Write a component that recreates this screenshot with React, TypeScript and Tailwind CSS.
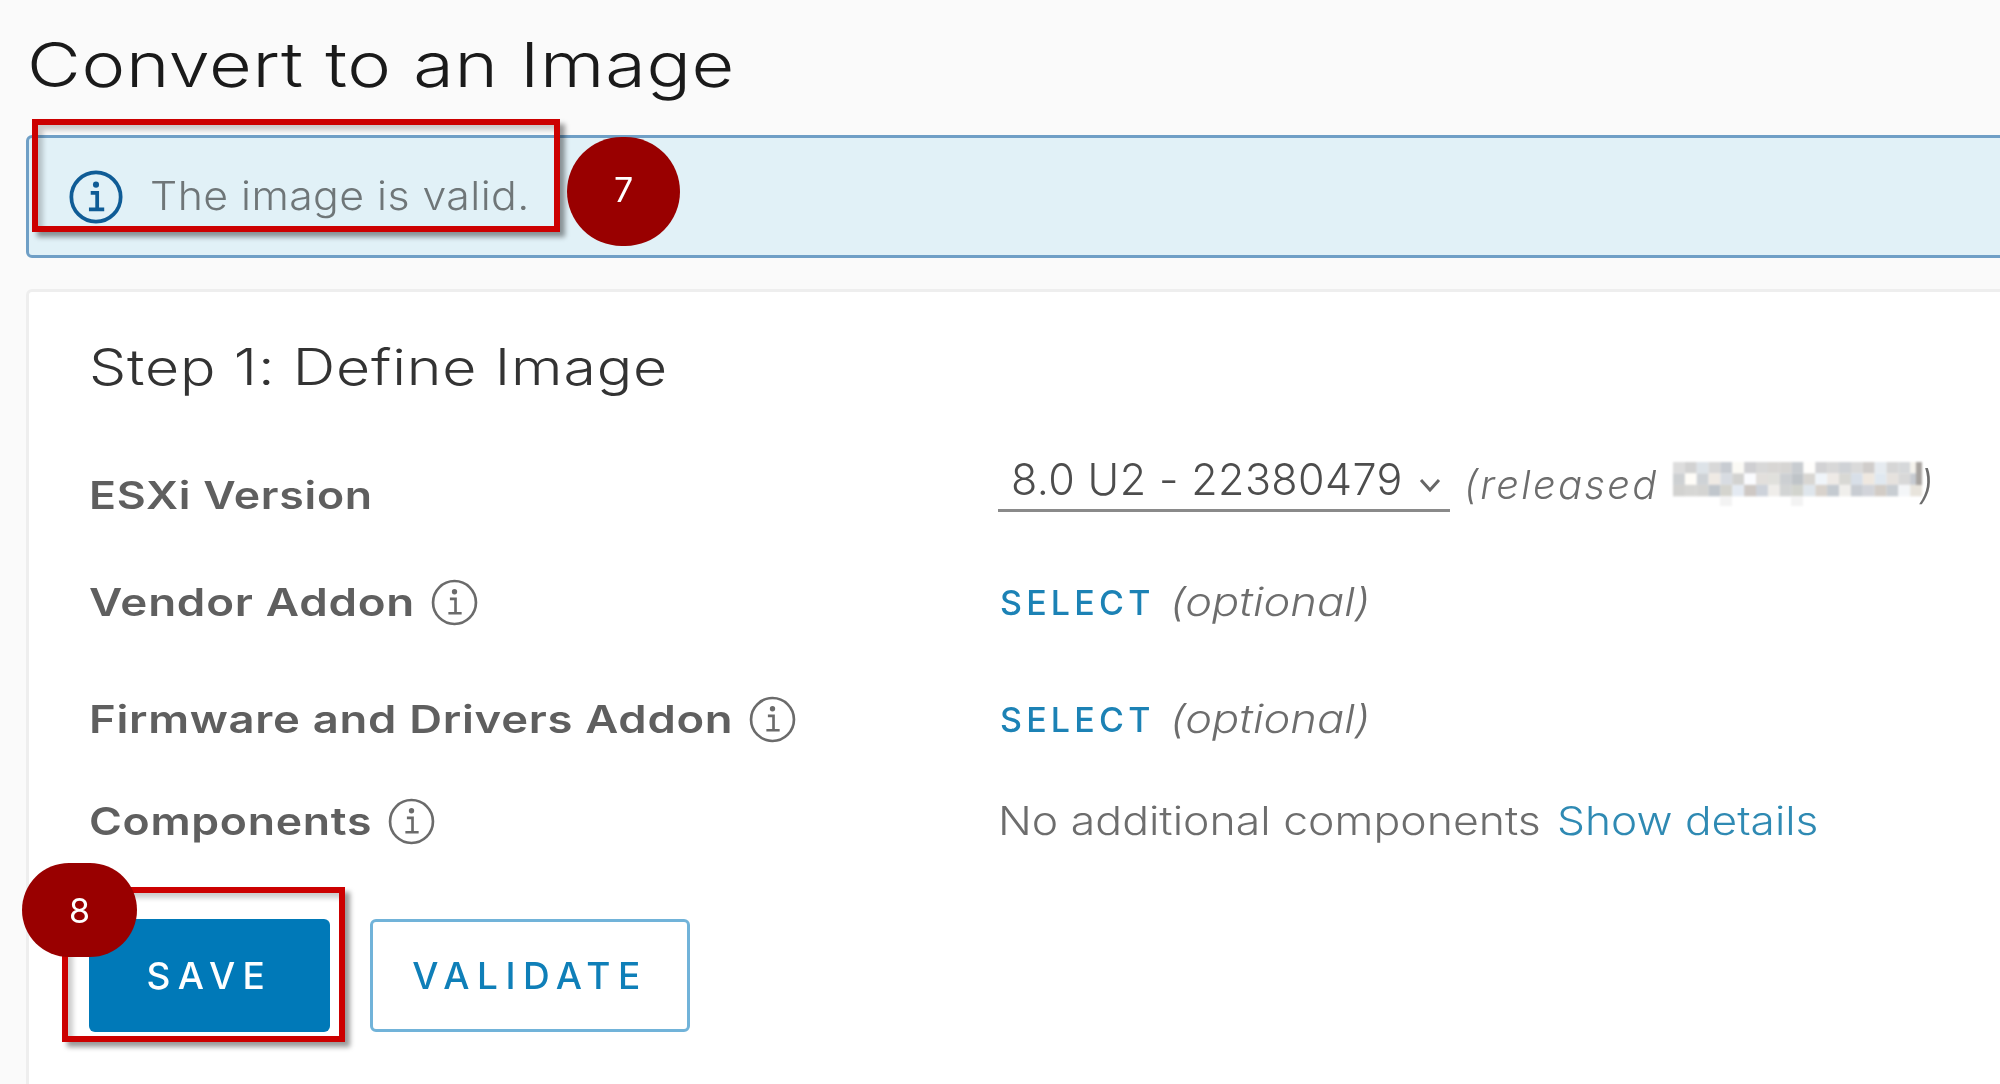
import React from "react";

const font = { fontFamily: '"Inter", "Liberation Sans", sans-serif' };

function Info({ color = "#6b6b6b", size = 47, sw = 2.6 }: { color?: string; size?: number; sw?: number }) {
  return (
    <svg width={size} height={size} viewBox="0 0 46 46" fill="none" className="shrink-0">
      <circle cx="23" cy="23" r="21" stroke={color} strokeWidth={sw} />
      <circle cx="23" cy="12.5" r="2.6" fill={color} />
      <path d="M18.5 19.5H24V33M17 33.5H30" stroke={color} strokeWidth={sw} />
    </svg>
  );
}

/* The original UI face is wider than any installed one: text is widened inside a box of its real width. */
function Wide({ w, s, children }: { w: string; s: string; children: React.ReactNode }) {
  return (
    <span className={`inline-block shrink-0 ${w}`}>
      <span className={`inline-block origin-left whitespace-nowrap ${s}`}>{children}</span>
    </span>
  );
}

const blurRows = [
  "ddd d2d2d2 dde3e8 d8d8d8 c8ccd2 fbfaf5 cfcfd2 d8d8d8 d8d6d4 d6d5d3 c8ccd0 fffefc d2d2d4 d8d8d8 cfd2d6 dadada d0cdcb e6ebf0 d6d6d6 d6d8da f4f2ec",
  "cdd0d2 fffdf8 ced2d6 efeae4 d8dce2 d2d2d0 fbfcff e2dfdc e0e0dc cccfd2 bfc4c8 d8d6d2 f0f5fa eeeae6 d8d8d4 d8dfe8 efe8e0 e0e8f0 e6e2de d8d8d8 c6cad0",
  "d2d2d0 d6d6d4 d4d4d2 c0c6cc d4d4ce e4eaf2 cec8c4 cdd2da efedea d2d4d4 d2d4ce dfe6ec d8d2cc c4cad0 f0efec c8ccd2 d2d4da d2ccc6 c8cdd2 f4f6f8 e8e4dc",
];

function BlurredDate() {
  return (
    <svg width="249" height="46" viewBox="0 0 249 46" className="shrink-0 blur-[0.8px]">
      {blurRows.map((row, y) =>
        row.split(" ").map((c, x) => (
          <rect key={`${x}-${y}`} x={x * 11.86} y={y * 11.4} width="11.96" height="11.5" fill={`#${c}`} />
        )),
      )}
      <rect x="47" y="34" width="12" height="10" fill="#f3f3f3" />
      <rect x="118" y="34" width="12" height="10" fill="#f3f3f3" />
      <rect x="243" y="0" width="6" height="23" fill="#a8a4a0" />
    </svg>
  );
}

function Row({ h, label, w, s, info, children }: { h: string; label: string; w: string; s: string; info?: boolean; children: React.ReactNode }) {
  return (
    <div className={`flex items-center ${h}`}>
      <div className="flex w-[909px] shrink-0 items-center gap-[18px] text-[38px] font-semibold tracking-[0.6px] text-[#5f5f5f]">
        <Wide w={w} s={s}>{label}</Wide>
        {info && <Info />}
      </div>
      {children}
    </div>
  );
}

function Select() {
  return (
    <div className="flex items-center gap-[15px]">
      <span className="ml-[2px] text-[34px] font-medium tracking-[4.2px] text-[#1c82b5]">SELECT</span>
      <span className="text-[39px] font-light italic text-[#6d6d6d]">
        <Wide w="w-[197px]" s="scale-x-[1.16]">(optional)</Wide>
      </span>
    </div>
  );
}

export default function App() {
  return (
    <div style={font} className="relative h-[1084px] w-[2000px] overflow-hidden bg-[#fafafa] blur-[0.4px]">
      <div className="pl-[26px] pt-[26px]">
        <h1 className="ml-[1px] h-[109px] pt-[1px] text-[62px] font-light leading-[76px] tracking-[0.6px] text-[#1a1a1a]">
          <Wide w="w-[708px]" s="scale-x-[1.19]">Convert to an Image</Wide>
        </h1>
        <div className="mr-[-20px] flex h-[123px] items-center gap-[27px] rounded-[6px] border-[3px] border-[#6f9fc6] bg-[#e1f1f7] pl-[40px]">
          <Info color="#0f5c96" size={54} sw={3.2} />
          <span className="mb-[2px] text-[40px] font-light tracking-[0.4px] text-[#6f7678]">
            <Wide w="w-[378px]" s="scale-x-[1.07]">The image is valid.</Wide>
          </span>
        </div>
        <div className="mr-[-20px] mt-[31px] h-[900px] rounded-[6px] border-[3px] border-[#eeeeee] bg-white pl-[60px] pt-[40px]">
          <h2 className="h-[110px] text-[50px] font-light leading-[70px] tracking-[0.7px] text-[#333333]">
            <Wide w="w-[576px]" s="scale-x-[1.18]">Step 1: Define Image</Wide>
          </h2>
          <Row h="h-[107px]" label="ESXi Version" w="w-[282px]" s="scale-x-[1.175]">
            <div className="mb-[29px] flex items-center">
              <div className="flex h-[61px] w-[452px] items-center gap-[14px] border-b-[3px] border-[#8a8a8a] pl-[13px] text-[43px] font-light text-[#4d4d4d]">
                <span className="tracking-[0.4px]">8.0 U2 - 22380479</span>
                <svg width="26" height="16" viewBox="0 0 26 16" fill="none" className="mt-[10px]">
                  <path d="M4 3l9 10 9-10" stroke="#666666" strokeWidth="3" />
                </svg>
              </div>
              <div className="ml-[14px] mt-[8px] flex items-center gap-[14px] text-[40px] font-light italic tracking-[2.3px] text-[#6d6d6d]">
                <span>(released</span>
                <span className="flex items-center">
                  <BlurredDate />
                  <span className="ml-[-2px]">)</span>
                </span>
              </div>
            </div>
          </Row>
          <Row h="h-[107px]" label="Vendor Addon" w="w-[324px]" s="scale-x-[1.204]" info>
            <Select />
          </Row>
          <Row h="h-[127px]" label="Firmware and Drivers Addon" w="w-[642px]" s="scale-x-[1.195]" info>
            <Select />
          </Row>
          <Row h="h-[77px]" label="Components" w="w-[281px]" s="scale-x-[1.174]" info>
            <div className="flex items-center gap-[18px] text-[39px] font-light">
              <span className="text-[#6d6d6d]">
                <Wide w="w-[541px]" s="scale-x-[1.143]">No additional components</Wide>
              </span>
              <span className="text-[#2f8ab3]">
                <Wide w="w-[259px]" s="scale-x-[1.134]">Show details</Wide>
              </span>
            </div>
          </Row>
          <div className="mt-[59px] flex gap-[40px]">
            <button className="h-[113px] w-[241px] rounded-[6px] bg-[#0079b8] text-[37px] font-medium tracking-[7.5px] text-white">SAVE</button>
            <button className="h-[113px] w-[320px] rounded-[6px] border-[3px] border-[#71b3d9] bg-white text-[37px] font-medium tracking-[7.5px] text-[#0f7fb8]">VALIDATE</button>
          </div>
        </div>
      </div>

      <div className="absolute left-[32px] top-[119px] h-[113px] w-[528px] border-[6px] border-[#cc0000] shadow-[5px_5px_5px_rgba(0,0,0,0.4),inset_5px_5px_5px_rgba(0,0,0,0.2)]" />
      <div className="absolute left-[62px] top-[887px] h-[155px] w-[283px] border-[6px] border-[#cc0000] shadow-[5px_5px_5px_rgba(0,0,0,0.4),inset_5px_5px_5px_rgba(0,0,0,0.2)]" />
      <div className="absolute left-[567px] top-[137px] flex h-[109px] w-[113px] items-center justify-center rounded-full bg-[#990000] pb-[4px] text-[34px] text-white">7</div>
      <div className="absolute left-[22px] top-[863px] flex h-[94px] w-[115px] items-center justify-center rounded-full bg-[#990000] text-[34px] text-white">8</div>
    </div>
  );
}
